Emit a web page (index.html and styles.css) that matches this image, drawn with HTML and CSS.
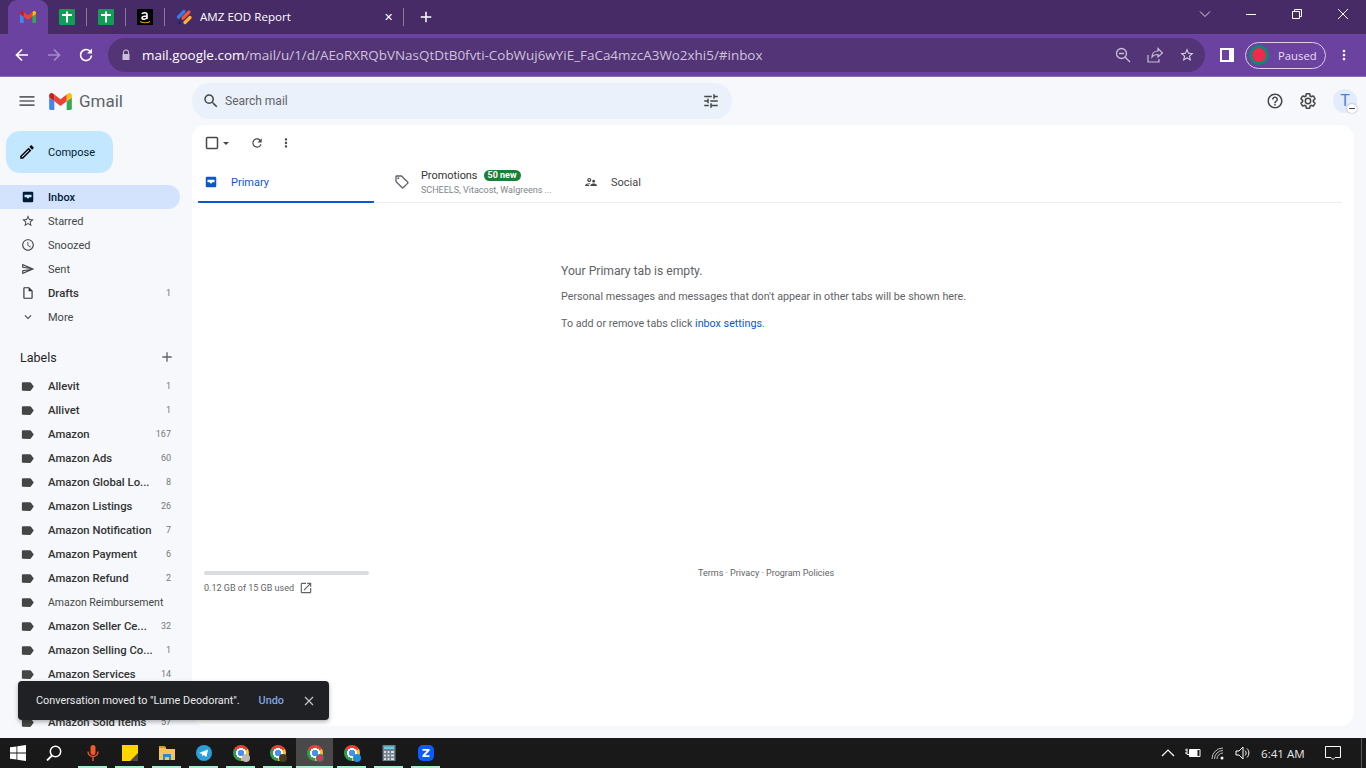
FILE: index.html
```html
<!DOCTYPE html>
<html lang="en">
<head>
  <meta charset="UTF-8">
  <title>Inbox - Gmail</title>
  <link rel="stylesheet" href="styles.css">
</head>
<body>
  <svg class="defs" width="0" height="0">
    <symbol id="i-menu" viewBox="0 0 24 24"><path d="M3 18h18v-2H3v2zm0-5h18v-2H3v2zm0-7v2h18V6H3z"/></symbol>
    <symbol id="i-search" viewBox="0 0 24 24"><path d="M15.5 14h-.79l-.28-.27A6.471 6.471 0 0 0 16 9.5 6.5 6.5 0 1 0 9.5 16c1.61 0 3.09-.59 4.23-1.57l.27.28v.79l5 4.99L20.49 19l-4.99-5zm-6 0C7.01 14 5 11.99 5 9.5S7.01 5 9.5 5 14 7.01 14 9.5 11.99 14 9.5 14z"/></symbol>
    <symbol id="i-tune" viewBox="0 0 24 24"><path d="M3 17v2h6v-2H3zM3 5v2h10V5H3zm10 16v-2h8v-2h-8v-2h-2v6h2zM7 9v2H3v2h4v2h2V9H7zm14 4v-2H11v2h10zm-6-4h2V7h4V5h-4V3h-2v6z"/></symbol>
    <symbol id="i-help" viewBox="0 0 24 24"><path d="M11 18h2v-2h-2v2zm1-16C6.48 2 2 6.48 2 12s4.48 10 10 10 10-4.48 10-10S17.52 2 12 2zm0 18c-4.41 0-8-3.59-8-8s3.59-8 8-8 8 3.59 8 8-3.59 8-8 8zm0-14c-2.21 0-4 1.79-4 4h2c0-1.1.9-2 2-2s2 .9 2 2c0 2-3 1.75-3 5h2c0-2.25 3-2.5 3-5 0-2.21-1.79-4-4-4z"/></symbol>
    <symbol id="i-gear" viewBox="0 0 24 24"><path fill="none" stroke="currentColor" stroke-width="2" d="M19.14 12.94c.04-.3.06-.61.06-.94 0-.32-.02-.64-.07-.94l2.03-1.58a.49.49 0 0 0 .12-.61l-1.92-3.32a.488.488 0 0 0-.59-.22l-2.39.96c-.5-.38-1.03-.7-1.62-.94l-.36-2.54a.484.484 0 0 0-.48-.41h-3.84c-.24 0-.43.17-.47.41l-.36 2.54c-.59.24-1.13.57-1.62.94l-2.39-.96c-.22-.08-.47 0-.59.22L2.74 8.87c-.12.21-.08.47.12.61l2.03 1.58c-.05.3-.09.63-.09.94s.02.64.07.94l-2.03 1.58a.49.49 0 0 0-.12.61l1.92 3.32c.12.22.37.29.59.22l2.39-.96c.5.38 1.03.7 1.62.94l.36 2.54c.05.24.24.41.48.41h3.84c.24 0 .44-.17.47-.41l.36-2.54c.59-.24 1.13-.56 1.62-.94l2.39.96c.22.08.47 0 .59-.22l1.92-3.32c.12-.22.07-.47-.12-.61l-2.01-1.58zM12 15.6c-1.98 0-3.6-1.62-3.6-3.6s1.62-3.6 3.6-3.6 3.6 1.62 3.6 3.6-1.62 3.6-3.6 3.6z"/></symbol>
    <symbol id="i-pencil" viewBox="0 0 24 24"><path d="M14.06 9.02l.92.92L5.92 19H5v-.92l9.06-9.06M17.66 3c-.25 0-.51.1-.7.29l-1.83 1.83 3.75 3.75 1.83-1.83c.39-.39.39-1.02 0-1.41l-2.34-2.34c-.2-.2-.45-.29-.71-.29zm-3.6 3.19L3 17.25V21h3.75L17.81 9.94l-3.75-3.75z"/></symbol>
    <symbol id="i-inbox" viewBox="0 0 24 24"><path fill-rule="evenodd" d="M5 3h14a2 2 0 0 1 2 2v14a2 2 0 0 1-2 2H5a2 2 0 0 1-2-2V5a2 2 0 0 1 2-2zm1 5v4.5h4a2 2 0 0 0 4 0h4V8z"/></symbol>
    <symbol id="i-star" viewBox="0 0 24 24"><path d="M22 9.24l-7.19-.62L12 2 9.19 8.63 2 9.24l5.46 4.73L5.82 21 12 17.27 18.18 21l-1.63-7.03L22 9.24zM12 15.4l-3.76 2.27 1-4.28-3.32-2.88 4.38-.38L12 6.1l1.71 4.04 4.38.38-3.32 2.88 1 4.28L12 15.4z"/></symbol>
    <symbol id="i-clock" viewBox="0 0 24 24"><path d="M11.99 2C6.47 2 2 6.48 2 12s4.47 10 9.99 10C17.52 22 22 17.52 22 12S17.52 2 11.99 2zM12 20c-4.42 0-8-3.58-8-8s3.58-8 8-8 8 3.58 8 8-3.58 8-8 8zm.5-13H11v6l5.25 3.15.75-1.23-4.5-2.67z"/></symbol>
    <symbol id="i-sent" viewBox="0 0 24 24"><path d="M4.01 6.03l7.51 3.22-7.52-1 .01-2.22m7.5 8.72L4 17.97v-2.22l7.51-1M2.01 3L2 10l15 2-15 2 .01 7L23 12 2.01 3z"/></symbol>
    <symbol id="i-draft" viewBox="0 0 24 24"><path d="M14 2H6c-1.1 0-1.99.9-1.99 2L4 20c0 1.1.89 2 1.99 2H18c1.1 0 2-.9 2-2V8l-6-6zm4 18H6V4h7v5h5v11z"/></symbol>
    <symbol id="i-chevron" viewBox="0 0 24 24"><path d="M7.41 8.59L12 13.17l4.59-4.58L18 10l-6 6-6-6z"/></symbol>
    <symbol id="i-plus" viewBox="0 0 24 24"><path d="M19 13h-6v6h-2v-6H5v-2h6V5h2v6h6v2z"/></symbol>
    <symbol id="i-label" viewBox="0 0 24 24"><path d="M17.63 5.84C17.27 5.33 16.67 5 16 5L5 5.01C3.9 5.01 3 5.9 3 7v10c0 1.1.9 1.99 2 1.99L16 19c.67 0 1.27-.33 1.63-.84L22 12l-4.37-6.16z"/></symbol>
    <symbol id="i-refresh" viewBox="0 0 24 24"><path d="M17.65 6.35C16.2 4.9 14.21 4 12 4c-4.42 0-7.99 3.58-7.99 8s3.57 8 7.99 8c3.73 0 6.84-2.55 7.73-6h-2.08c-.82 2.33-3.04 4-5.65 4-3.31 0-6-2.69-6-6s2.69-6 6-6c1.66 0 3.14.69 4.22 1.78L13 11h7V4l-2.35 2.35z"/></symbol>
    <symbol id="i-dots" viewBox="0 0 24 24"><path d="M12 8c1.1 0 2-.9 2-2s-.9-2-2-2-2 .9-2 2 .9 2 2 2zm0 2c-1.1 0-2 .9-2 2s.9 2 2 2 2-.9 2-2-.9-2-2-2zm0 6c-1.1 0-2 .9-2 2s.9 2 2 2 2-.9 2-2-.9-2-2-2z"/></symbol>
    <symbol id="i-tag" viewBox="0 0 24 24"><path d="M21.41 11.58l-9-9C12.05 2.22 11.55 2 11 2H4c-1.1 0-2 .9-2 2v7c0 .55.22 1.05.59 1.42l9 9c.36.36.86.58 1.41.58.55 0 1.05-.22 1.41-.59l7-7c.37-.36.59-.86.59-1.41 0-.55-.23-1.06-.59-1.42zM13 20.01L4 11V4h7v-.01l9 9-7 7.02z"/><circle cx="6.5" cy="6.5" r="1.5"/></symbol>
    <symbol id="i-people" viewBox="0 0 24 24"><path d="M9 12c1.93 0 3.5-1.57 3.5-3.5S10.93 5 9 5 5.5 6.57 5.5 8.5 7.07 12 9 12zm0-5c.83 0 1.5.67 1.5 1.5S9.83 10 9 10s-1.5-.67-1.5-1.5S8.17 7 9 7zm.05 10H4.77c.99-.5 2.7-1 4.23-1 .11 0 .23.01.34.01.34-.73.93-1.33 1.64-1.81-.73-.13-1.42-.2-1.98-.2-2.34 0-7 1.17-7 3.5V19h7v-1.5c0-.17.02-.34.05-.5zm7.45-2.5c-1.84 0-5.5 1.01-5.5 3V19h11v-1.5c0-1.99-3.66-3-5.5-3zm1.21-1.82c.76-.43 1.29-1.24 1.29-2.18C19 9.12 17.88 8 16.5 8S14 9.12 14 10.5c0 .94.53 1.75 1.29 2.18.36.2.77.32 1.21.32s.85-.12 1.21-.32z"/></symbol>
    <symbol id="i-open" viewBox="0 0 24 24"><path d="M19 19H5V5h7V3H5a2 2 0 0 0-2 2v14a2 2 0 0 0 2 2h14c1.1 0 2-.9 2-2v-7h-2v7zM14 3v2h3.59l-9.83 9.83 1.41 1.41L19 6.41V10h2V3h-7z"/></symbol>
    <symbol id="i-m" viewBox="52 42 88 66">
      <path fill="#4285f4" d="M58 108h14V74L52 59v43c0 3.32 2.69 6 6 6"/>
      <path fill="#34a853" d="M120 108h14c3.32 0 6-2.69 6-6V59l-20 15"/>
      <path fill="#fbbc04" d="M120 48v26l20-15v-8c0-7.42-8.47-11.65-14.4-7.2"/>
      <path fill="#ea4335" d="M72 74V48l24 18 24-18v26L96 92"/>
      <path fill="#c5221f" d="M52 51v8l20 15V48l-5.6-4.2c-5.94-4.45-14.4-.22-14.4 7.2"/>
    </symbol>
    <symbol id="i-sheet" viewBox="0 0 16 16">
      <rect width="16" height="16" rx="1" fill="#0f9d58"/>
      <path fill="#fff" d="M7 2.500h2V5h4v2H9v6.500H7V7H3V5h4z"/>
    </symbol>
  </svg>

  <div class="tabstrip">
    <div class="tab tab-active"><svg class="fav"><use href="#i-m"/></svg></div>
    <div class="tab"><svg class="fav"><use href="#i-sheet"/></svg></div>
    <div class="tab tab-sep"><svg class="fav"><use href="#i-sheet"/></svg></div>
    <div class="tab tab-sep">
      <svg class="fav" viewBox="0 0 16 16"><rect width="16" height="16" fill="#000"/><path fill="none" stroke="#fff" stroke-width="1.6" d="M5 5c.5-1.5 5-2 5 .5V10M10 7c-3 0-5 .5-5 2 0 2 4 1.500 5-.5"/><path fill="none" stroke="#f90" stroke-width="1.2" d="M3 12.500c3 1.500 7 1.500 10 0"/></svg>
    </div>
    <div class="tab tab-wide tab-sep">
      <svg class="fav" viewBox="0 0 16 16"><path stroke="#2f80ed" stroke-width="3.200" stroke-linecap="round" d="M2.500 8L8 2.500"/><path stroke="#f2542d" stroke-width="3.200" stroke-linecap="round" d="M7 9l6-6"/><path stroke="#f9b233" stroke-width="3.200" stroke-linecap="round" d="M9 13.500l5-5"/><path fill="#1d2b5a" d="M1 15l4-4v4z"/></svg>
      <span class="tab-title">AMZ EOD Report</span>
      <span class="tab-x">&#x2715;</span>
    </div>
    <div class="new-tab"><svg class="ico-18"><use href="#i-plus"/></svg></div>
    <div class="win-controls">
      <svg width="12" height="12" viewBox="0 0 12 12"><path d="M1 3.500l5 5 5-5" fill="none" stroke="#d9d0e6"/></svg>
      <svg width="12" height="12" viewBox="0 0 12 12"><path d="M1 6.500h10" stroke="#fff"/></svg>
      <svg width="12" height="12" viewBox="0 0 12 12"><path d="M1.500 3.500h7v7h-7zM3.500 3.500v-2h7v7h-2" fill="none" stroke="#fff"/></svg>
      <svg width="12" height="12" viewBox="0 0 12 12"><path d="M1 1l10 10M11 1L1 11" stroke="#fff"/></svg>
    </div>
  </div>

  <div class="toolbar">
    <svg class="nav-arrow" viewBox="0 0 16 16"><path d="M14 8H2.500M8 2.500L2.500 8 8 13.500" fill="none" stroke="#fff" stroke-width="1.700"/></svg>
    <svg class="nav-arrow" viewBox="0 0 16 16"><path d="M2 8h11.500M8 2.500L13.500 8 8 13.500" fill="none" stroke="#a48cc6" stroke-width="1.700"/></svg>
    <svg class="nav-arrow" viewBox="0 0 16 16"><path d="M13.500 8.500A5.500 5.500 0 1 1 11.800 4" fill="none" stroke="#fff" stroke-width="1.700"/><path d="M14 1.500V6.500H9z" fill="#fff"/></svg>
    <div class="omnibox">
      <svg class="lock" viewBox="0 0 12 12"><path fill="#c9bfd8" d="M2.500 5h7v6h-7zM4 5V3.500a2 2 0 0 1 4 0V5h1V3.500a3 3 0 0 0-6 0V5z"/></svg>
      <span class="url"><b>mail.google.com</b>/mail/u/1/d/AEoRXRQbVNasQtDtB0fvti-CobWuj6wYiE_FaCa4mzcA3Wo2xhi5/#inbox</span>
      <svg class="omni-ico" viewBox="0 0 16 16"><circle cx="6.500" cy="6.500" r="5" fill="none" stroke="#c9bfd8" stroke-width="1.300"/><path d="M4 6.500h5M10.200 10.200L15 15" stroke="#c9bfd8" stroke-width="1.300"/></svg>
      <svg class="omni-ico" viewBox="0 0 16 16"><path d="M1 8v7h11v-3M5 10c0-4 3-6 6-6V1.500l4.500 4.500L11 10V7.500c-3 0-5 1-6 2.500z" fill="none" stroke="#c9bfd8" stroke-width="1.200"/></svg>
      <svg class="omni-ico" viewBox="0 0 24 24"><use href="#i-star" fill="#d8d0e4"/></svg>
    </div>
    <div class="side-panel"></div>
    <div class="paused">
      <span class="melon"></span>
      <span>Paused</span>
    </div>
    <svg class="ico-16 tb-dots"><use href="#i-dots"/></svg>
  </div>

  <div class="gmail">
    <header class="g-header">
      <div class="brand">
        <svg class="ico-20 ink"><use href="#i-menu"/></svg>
        <svg class="logo-m"><use href="#i-m"/></svg>
        <span class="logo-text">Gmail</span>
      </div>
      <div class="search">
        <svg class="ico-18 ink-dark"><use href="#i-search"/></svg>
        <span class="search-text">Search mail</span>
        <svg class="ico-18 ink-dark"><use href="#i-tune"/></svg>
      </div>
      <div class="g-actions">
        <svg class="ico-18 ink-dark"><use href="#i-help"/></svg>
        <svg class="ico-18 ink-dark"><use href="#i-gear"/></svg>
        <div class="avatar">T<span class="avatar-badge"></span></div>
      </div>
    </header>

    <div class="g-body">
      <aside class="sidebar">
        <button class="compose"><svg class="ico-18"><use href="#i-pencil"/></svg>Compose</button>

        <ul class="nav">
          <li class="nav-item active"><svg class="ico-14"><use href="#i-inbox"/></svg><span class="nav-name">Inbox</span></li>
          <li class="nav-item"><svg class="ico-14"><use href="#i-star"/></svg><span class="nav-name">Starred</span></li>
          <li class="nav-item"><svg class="ico-14"><use href="#i-clock"/></svg><span class="nav-name">Snoozed</span></li>
          <li class="nav-item"><svg class="ico-14"><use href="#i-sent"/></svg><span class="nav-name">Sent</span></li>
          <li class="nav-item strong"><svg class="ico-14"><use href="#i-draft"/></svg><span class="nav-name">Drafts</span><span class="count">1</span></li>
          <li class="nav-item"><svg class="ico-14"><use href="#i-chevron"/></svg><span class="nav-name">More</span></li>
        </ul>

        <div class="labels-head"><span>Labels</span><svg class="ico-16"><use href="#i-plus"/></svg></div>

        <ul class="nav">
          <li class="nav-item strong"><svg class="ico-label"><use href="#i-label"/></svg><span class="nav-name">Allevit</span><span class="count">1</span></li>
          <li class="nav-item strong"><svg class="ico-label"><use href="#i-label"/></svg><span class="nav-name">Allivet</span><span class="count">1</span></li>
          <li class="nav-item strong"><svg class="ico-label"><use href="#i-label"/></svg><span class="nav-name">Amazon</span><span class="count">167</span></li>
          <li class="nav-item strong"><svg class="ico-label"><use href="#i-label"/></svg><span class="nav-name">Amazon Ads</span><span class="count">60</span></li>
          <li class="nav-item strong"><svg class="ico-label"><use href="#i-label"/></svg><span class="nav-name">Amazon Global Lo...</span><span class="count">8</span></li>
          <li class="nav-item strong"><svg class="ico-label"><use href="#i-label"/></svg><span class="nav-name">Amazon Listings</span><span class="count">26</span></li>
          <li class="nav-item strong"><svg class="ico-label"><use href="#i-label"/></svg><span class="nav-name">Amazon Notification</span><span class="count">7</span></li>
          <li class="nav-item strong"><svg class="ico-label"><use href="#i-label"/></svg><span class="nav-name">Amazon Payment</span><span class="count">6</span></li>
          <li class="nav-item strong"><svg class="ico-label"><use href="#i-label"/></svg><span class="nav-name">Amazon Refund</span><span class="count">2</span></li>
          <li class="nav-item plain"><svg class="ico-label"><use href="#i-label"/></svg><span class="nav-name">Amazon Reimbursement</span></li>
          <li class="nav-item strong"><svg class="ico-label"><use href="#i-label"/></svg><span class="nav-name">Amazon Seller Ce...</span><span class="count">32</span></li>
          <li class="nav-item strong"><svg class="ico-label"><use href="#i-label"/></svg><span class="nav-name">Amazon Selling Co...</span><span class="count">1</span></li>
          <li class="nav-item strong"><svg class="ico-label"><use href="#i-label"/></svg><span class="nav-name">Amazon Services</span><span class="count">14</span></li>
          <li class="nav-item"></li>
          <li class="nav-item strong"><svg class="ico-label"><use href="#i-label"/></svg><span class="nav-name">Amazon Sold Items</span><span class="count">57</span></li>
        </ul>
      </aside>

      <main class="card">
        <div class="card-tools">
          <svg class="ico-16" viewBox="0 0 16 16"><rect x="2.500" y="2.500" width="11" height="11" rx="1" fill="none" stroke="#444746" stroke-width="1.500"/></svg>
          <span class="caret"></span>
          <svg class="ico-14 tool-refresh"><use href="#i-refresh"/></svg>
          <svg class="ico-14 tool-dots"><use href="#i-dots"/></svg>
        </div>

        <div class="tabs">
          <div class="mail-tab primary"><svg class="ico-14"><use href="#i-inbox"/></svg><span>Primary</span></div>
          <div class="mail-tab promos">
            <svg class="ico-16"><use href="#i-tag"/></svg>
            <div>
              <div class="promo-top">Promotions <span class="new-badge">50 new</span></div>
              <div class="promo-sub">SCHEELS, Vitacost, Walgreens ...</div>
            </div>
          </div>
          <div class="mail-tab social"><svg class="ico-14"><use href="#i-people"/></svg><span>Social</span></div>
        </div>

        <section class="empty">
          <p class="empty-title">Your Primary tab is empty.</p>
          <p>Personal messages and messages that don't appear in other tabs will be shown here.</p>
          <p>To add or remove tabs click <a class="link">inbox settings</a>.</p>
        </section>

        <footer class="card-foot">
          <div class="storage">
            <div class="storage-bar"></div>
            <div class="storage-text">0.12 GB of 15 GB used <svg class="ico-14"><use href="#i-open"/></svg></div>
          </div>
          <div class="terms">Terms · Privacy · Program Policies</div>
        </footer>
      </main>
    </div>

    <div class="toast">
      <span class="toast-msg">Conversation moved to "Lume Deodorant".</span>
      <span class="toast-undo">Undo</span>
      <svg class="toast-x" viewBox="0 0 10 10"><path d="M1 1l8 8M9 1L1 9" stroke="#bdc1c6" stroke-width="1.300"/></svg>
    </div>
  </div>

  <div class="taskbar">
    <div class="task-start">
      <svg class="task-ico" viewBox="0 0 16 16"><path fill="#fff" d="M0 2.300l6.500-.9v6.200H0zM7.300 1.300L16 0v7.600H7.300zM0 8.400h6.500v6.200L0 13.700zM7.300 8.400H16V16l-8.700-1.200z"/></svg>
    </div>
    <div class="task-search">
      <svg class="task-ico" viewBox="0 0 16 16"><circle cx="9.500" cy="6.500" r="5.200" fill="none" stroke="#fff" stroke-width="1.500"/><path d="M6 10.500L1 15.500" stroke="#fff" stroke-width="1.800"/></svg>
    </div>
    <div class="task-app open">
      <svg class="task-ico" viewBox="0 0 16 16"><rect x="5.500" y="0" width="5" height="10" rx="2.500" fill="#f0592b"/><path d="M3 6.500c0 6.500 10 6.500 10 0M8 12v4" fill="none" stroke="#f0592b" stroke-width="1.400"/></svg>
    </div>
    <div class="task-app open">
      <svg class="task-ico" viewBox="0 0 16 16"><rect width="16" height="16" fill="#ffd500"/><path d="M8 16l8-8v8z" fill="#4a4a4a"/></svg>
    </div>
    <div class="task-app open">
      <svg class="task-ico" viewBox="0 0 16 16"><path d="M0 2h6l1.500 2H16v11H0z" fill="#f5c558"/><path d="M0 1h6l1 2H0z" fill="#d99a20"/><path d="M4 9h8v6h-2v-3H6v3H4z" fill="#2b88d8"/></svg>
    </div>
    <div class="task-app open">
      <svg class="task-ico" viewBox="0 0 16 16"><circle cx="8" cy="8" r="8" fill="#2a9fd8"/><path d="M3 8l9-3.500-1.500 7.500-3-2-1 1.500-.5-2.500z" fill="#fff"/></svg>
    </div>
    <div class="task-app open"><span class="chrome"><span class="chrome-badge badge-grey"></span></span></div>
    <div class="task-app open"><span class="chrome"><span class="chrome-badge badge-dark"></span></span></div>
    <div class="task-app open current"><span class="chrome"><span class="chrome-badge badge-melon"></span></span></div>
    <div class="task-app open"><span class="chrome"><span class="chrome-badge badge-blue"></span></span></div>
    <div class="task-app open">
      <svg class="task-ico" viewBox="0 0 16 16"><rect x="1.500" width="13" height="16" fill="#6f7f8c"/><rect x="3" y="1.500" width="10" height="2.500" fill="#5fd0ea"/><path d="M3 6h2v2H3zM6.500 6h2v2h-2zM10 6h3v2h-3zM3 9.500h2v2H3zM6.500 9.500h2v2h-2zM10 9.500h3v2h-3zM3 13h2v2H3zM6.500 13h2v2h-2zM10 13h3v2h-3z" fill="#d6dde2"/></svg>
    </div>
    <div class="task-app open">
      <svg class="task-ico" viewBox="0 0 16 16"><rect width="16" height="16" rx="5" fill="#0b5cff"/><path d="M4.500 4h7v1.800L7.200 10.300h4.300V12h-7v-1.800l4.300-4.500H4.500z" fill="#fff"/></svg>
    </div>

    <div class="tray">
      <svg class="tray-ico" viewBox="0 0 16 16"><path d="M2 11l6-6 6 6" fill="none" stroke="#fff" stroke-width="1.200"/></svg>
      <svg class="tray-ico" viewBox="0 0 16 16"><path d="M0 5h2M0 8h2M2 3.500v6h2M4.500 4.500h10.500v7H4.500z" fill="none" stroke="#fff"/><rect x="4.500" y="5" width="8" height="6" fill="#fff"/></svg>
      <svg class="tray-ico" viewBox="0 0 16 16"><path d="M2 14a11 11 0 0 1 11-11M4.500 14a8.500 8.500 0 0 1 8.500-8.500M7 14a6 6 0 0 1 6-6" fill="none" stroke="#cfcfcf" stroke-width=".9"/><circle cx="12" cy="13" r="1.500" fill="#fff"/></svg>
      <svg class="tray-ico" viewBox="0 0 16 16"><path d="M1 6h3l4-4v12l-4-4H1zM10 5.500c1.500 1.500 1.500 3.500 0 5M12 3.500c2.500 2.500 2.500 6.500 0 9" fill="none" stroke="#fff"/></svg>
      <span class="clock">6:41 AM</span>
      <svg class="tray-note" viewBox="0 0 16 16"><path d="M.5 1.500h15v11H10l-2 2-2-2H.5z" fill="none" stroke="#fff"/></svg>
      <span class="show-desktop"></span>
    </div>
  </div>
</body>
</html>
```

FILE: styles.css
```css
* {
  box-sizing: border-box;
}
html, body {
  margin: 0;
  height: 768px;
  overflow: hidden;
}
body {
  display: flex;
  flex-direction: column;
  font-family: Roboto, Arial, sans-serif;
  color: #444746;
  background: #f6f8fc;
}
svg {
  display: block;
  flex: none;
  fill: currentColor;
}
.defs {
  position: absolute;
}
ul {
  list-style: none;
  margin: 0;
  padding: 0;
}
.ico-14 { width: 14px; height: 14px; }
.ico-16 { width: 16px; height: 16px; }
.ico-18 { width: 18px; height: 18px; }
.ico-20 { width: 20px; height: 20px; }

/* browser tabs */
.tabstrip {
  height: 34px;
  flex: none;
  display: flex;
  background: #462b66;
  padding-left: 8px;
  color: #fff;
}
.tab {
  width: 39px;
  height: 34px;
  display: flex;
  align-items: center;
  justify-content: center;
  position: relative;
}
.tab-active {
  width: 40px;
  margin-right: -1px;
  background: #6b42a0;
  border-radius: 9px 9px 0 0;
}
.tab-sep::before {
  content: "";
  position: absolute;
  left: 0;
  top: 8px;
  height: 18px;
  width: 1px;
  background: #8a7a9f;
}
.fav {
  width: 16px;
  height: 16px;
}
.tab-wide {
  width: 239px;
  justify-content: flex-start;
  padding-left: 12px;
}
.tab-title {
  margin: -2px 0 0 8px;
  font: 11.6px "Open Sans", Arial, sans-serif;
  flex: 1;
}
.tab-x {
  font-size: 11px;
  margin-right: 10px;
}
.new-tab {
  width: 45px;
  display: flex;
  align-items: center;
  justify-content: center;
  border-left: 1px solid #8a7a9f;
  margin: 8px 0;
}
.win-controls {
  margin-left: auto;
  display: flex;
  align-items: flex-start;
  gap: 34px;
  padding: 8px 17px 0 0;
}

/* url bar */
.toolbar {
  height: 43px;
  flex: none;
  display: flex;
  align-items: center;
  background: #6b42a0;
  border-bottom: 1px solid #8d6cb8;
  padding-left: 14px;
}
.nav-arrow {
  width: 16px;
  height: 16px;
  margin-right: 16px;
}
.omnibox {
  width: 1097px;
  height: 34px;
  margin-left: -2px;
  display: flex;
  align-items: center;
  background: #533476;
  border-radius: 17px;
  padding: 0 10px 0 12px;
}
.lock {
  width: 12px;
  height: 12px;
}
.url {
  margin-left: 10px;
  flex: 1;
  font: 13.45px "Open Sans", Arial, sans-serif;
  color: #cdc3da;
  white-space: nowrap;
}
.url b {
  font-weight: 400;
  color: #fff;
}
.omni-ico {
  width: 16px;
  height: 16px;
  margin-left: 16px;
}
.side-panel {
  width: 14px;
  height: 14px;
  margin-left: 15px;
  background: #fff;
  border: 2px solid #fff;
  border-right-width: 5px;
  box-shadow: inset 0 0 0 9px #6b42a0;
}
.paused {
  width: 81px;
  height: 27px;
  margin-left: 11px;
  display: flex;
  align-items: center;
  gap: 9px;
  border: 1px solid #d9d0e6;
  border-radius: 14px;
  padding-left: 3px;
  font: 11.3px "Open Sans", Arial, sans-serif;
  color: #e6dff0;
}
.melon {
  width: 20px;
  height: 20px;
  border-radius: 50%;
  background: #ee2a4e;
  border: 3px solid #0d8a72;
}
.tb-dots {
  margin-left: 10px;
  color: #fff;
}

/* gmail page */
.gmail {
  flex: 1;
  min-height: 0;
  position: relative;
  display: flex;
  flex-direction: column;
}
.g-header {
  height: 48px;
  flex: none;
  display: flex;
  align-items: center;
}
.brand {
  width: 192px;
  display: flex;
  align-items: center;
  padding-left: 17px;
}
.ink { color: #5f6368; }
.ink-dark { color: #444746; }
.logo-m {
  width: 23px;
  height: 17px;
  margin-left: 12px;
}
.logo-text {
  margin-left: 7px;
  font-size: 17px;
  color: #5f6368;
}
.search {
  width: 540px;
  height: 36px;
  display: flex;
  align-items: center;
  background: #eaf1fb;
  border-radius: 18px;
  padding: 0 12px 0 10px;
}
.search-text {
  flex: 1;
  margin-left: 5px;
  font-size: 12px;
  color: #5f6368;
}
.g-actions {
  margin-left: auto;
  display: flex;
  align-items: center;
  gap: 15px;
  padding-right: 9px;
}
.avatar {
  width: 24px;
  height: 24px;
  margin-left: 1px;
  position: relative;
  border-radius: 50%;
  background: #e3ecfb;
  color: #4a7fd8;
  font-size: 16px;
  line-height: 24px;
  text-align: center;
}
.avatar-badge {
  position: absolute;
  right: 0;
  bottom: 0;
  width: 10px;
  height: 9px;
  border-radius: 50%;
  background: #fff;
  box-shadow: 0 0 2px rgba(0, 0, 0, .4);
}
.avatar-badge::after {
  content: "";
  position: absolute;
  left: 2px;
  top: 4px;
  width: 6px;
  height: 1px;
  background: #444;
}
.g-body {
  flex: 1;
  min-height: 0;
  display: flex;
}
.sidebar {
  width: 192px;
  flex: none;
  overflow: hidden;
}
.compose {
  width: 107px;
  height: 42px;
  margin: 6px 0 12px 6px;
  display: flex;
  align-items: center;
  gap: 12px;
  padding: 0 0 0 12px;
  border: none;
  border-radius: 14px;
  background: #c2e7ff;
  color: #001d35;
  font: 400 11px Roboto, Arial, sans-serif;
}
.compose svg {
  color: #000;
}
.nav-item {
  width: 180px;
  height: 24px;
  display: flex;
  align-items: center;
  padding: 0 9px 0 21px;
  font-size: 11px;
  color: #444746;
  border-radius: 0 12px 12px 0;
}
.nav-name {
  margin-left: 13px;
  flex: 1;
  white-space: nowrap;
}
.nav-item.active {
  background: #d3e3fd;
  color: #001d35;
  font-weight: 500;
}
.nav-item.strong {
  color: #333;
  font-size: 11.3px;
  font-weight: 500;
}
.nav-item.plain {
  font-size: 10.5px;
}
.ico-label {
  width: 15px;
  height: 15px;
  margin-left: -1px;
  color: #444746;
}
.count {
  font-size: 9px;
  font-weight: 400;
  color: #777;
}
.labels-head {
  height: 24px;
  margin-top: 16px;
  margin-bottom: 5px;
  width: 180px;
  display: flex;
  align-items: center;
  justify-content: space-between;
  padding: 0 5px 0 20px;
  font-size: 12.5px;
  color: #1f1f1f;
}
.labels-head svg {
  color: #5f6368;
}
.card {
  width: 1162px;
  height: 601px;
  display: flex;
  flex-direction: column;
  background: #fff;
  border-radius: 14px;
}
.card-tools {
  height: 36px;
  flex: none;
  display: flex;
  align-items: center;
  padding-left: 12px;
}
.caret {
  width: 0;
  height: 0;
  margin-left: 3px;
  border: 3.5px solid transparent;
  border-top: 3.5px solid #444746;
  border-bottom: none;
}
.tool-refresh {
  margin-left: 21px;
}
.tool-dots {
  margin-left: 15px;
}
.tabs {
  height: 42px;
  flex: none;
  width: 1150px;
  display: flex;
  border-bottom: 1px solid #eceff1;
  padding-left: 6px;
}
.mail-tab {
  height: 42px;
  display: flex;
  align-items: center;
  font-size: 11px;
  color: #444746;
}
.primary {
  width: 176px;
  padding: 2px 0 0 6px;
  gap: 13px;
  color: #0b57d0;
  border-bottom: 2px solid #0b57d0;
  border-radius: 0 0 1px 1px;
}
.promos {
  width: 210px;
  padding-left: 20px;
  gap: 11px;
}
.promos svg {
  color: #5f6368;
}
.promo-top {
  display: flex;
  align-items: center;
  gap: 6px;
  font-size: 10.9px;
  color: #333;
}
.new-badge {
  height: 11px;
  padding: 0 4px;
  border-radius: 6px;
  background: #188038;
  color: #fff;
  font-size: 9px;
  font-weight: 700;
  line-height: 11px;
}
.promo-sub {
  margin-top: 3px;
  font-size: 9px;
  color: #80868b;
  white-space: nowrap;
}
.social {
  gap: 13px;
}
.empty {
  height: 368px;
  flex: none;
  padding: 61px 0 0 369px;
  font-size: 10.74px;
  color: #5f6368;
}
.empty p {
  margin: 0 0 14px;
  line-height: 13px;
}
.empty .empty-title {
  margin-bottom: 12px;
  font-size: 12.15px;
  line-height: 14px;
}
.link {
  color: #0b57d0;
}
.card-foot {
  display: flex;
  padding-left: 12px;
  font-size: 9px;
  color: #5f6368;
}
.storage {
  width: 165px;
}
.storage-bar {
  height: 4px;
  border-radius: 2px;
  background: #dadce0;
}
.storage-text {
  margin-top: 6px;
  display: flex;
  align-items: center;
  gap: 5px;
}
.terms {
  margin-left: 329px;
  margin-top: -3px;
}

/* snackbar */
.toast {
  position: absolute;
  left: 18px;
  top: 604px;
  width: 311px;
  height: 39px;
  display: flex;
  align-items: center;
  padding: 0 15px 0 18px;
  background: #202124;
  border-radius: 4px;
  box-shadow: 0 2px 4px rgba(0, 0, 0, .3);
  color: #e8eaed;
  font-size: 10.85px;
}
.toast-msg {
  flex: 1;
  white-space: nowrap;
}
.toast-undo {
  color: #7fa6e0;
  font-weight: 500;
}
.toast-x {
  width: 10px;
  height: 10px;
  margin-left: 20px;
}

/* windows taskbar */
.taskbar {
  height: 30px;
  flex: none;
  display: flex;
  align-items: center;
  background: #191919;
}
.task-start {
  width: 37px;
  padding-left: 10px;
}
.task-search {
  width: 37px;
  padding-left: 9px;
}
.task-ico {
  width: 16px;
  height: 16px;
}
.task-app {
  width: 37px;
  height: 30px;
  display: flex;
  align-items: center;
  justify-content: center;
  position: relative;
}
.task-app.open::after {
  content: "";
  position: absolute;
  left: 4px;
  right: 4px;
  bottom: 0;
  height: 2px;
  background: #a6f0cf;
}
.task-app.current {
  background: #494949;
}
.task-app.current::after {
  left: 0;
  right: 0;
}
.chrome {
  width: 16px;
  height: 16px;
  position: relative;
  border-radius: 50%;
  background:
    radial-gradient(circle, #4a90f0 0 3.5px, #fff 3.5px 5px, transparent 5px),
    conic-gradient(#e94335 0 60deg, #fbc02d 60deg 180deg, #2e9e4f 180deg 300deg, #e94335 300deg);
}
.chrome-badge {
  position: absolute;
  right: -1px;
  bottom: -1px;
  width: 8px;
  height: 8px;
  border-radius: 50%;
}
.badge-grey { background: #b9b9b9; }
.badge-dark { background: #4b3a22; }
.badge-melon { background: #ee2a4e; border: 1.5px solid #0d8a72; }
.badge-blue { background: #1a8fe0; }
.tray {
  margin-left: auto;
  display: flex;
  align-items: center;
  height: 30px;
  color: #fff;
}
.tray-ico {
  width: 16px;
  height: 16px;
  margin-right: 9px;
}
.clock {
  width: 52px;
  margin-left: 1px;
  font: 11.6px "Open Sans", Arial, sans-serif;
  color: #e6e6e6;
}
.tray-note {
  width: 16px;
  height: 16px;
  margin-left: 12px;
}
.show-desktop {
  width: 1px;
  height: 30px;
  margin-left: 20px;
  margin-right: 4px;
  background: #555;
}
```
